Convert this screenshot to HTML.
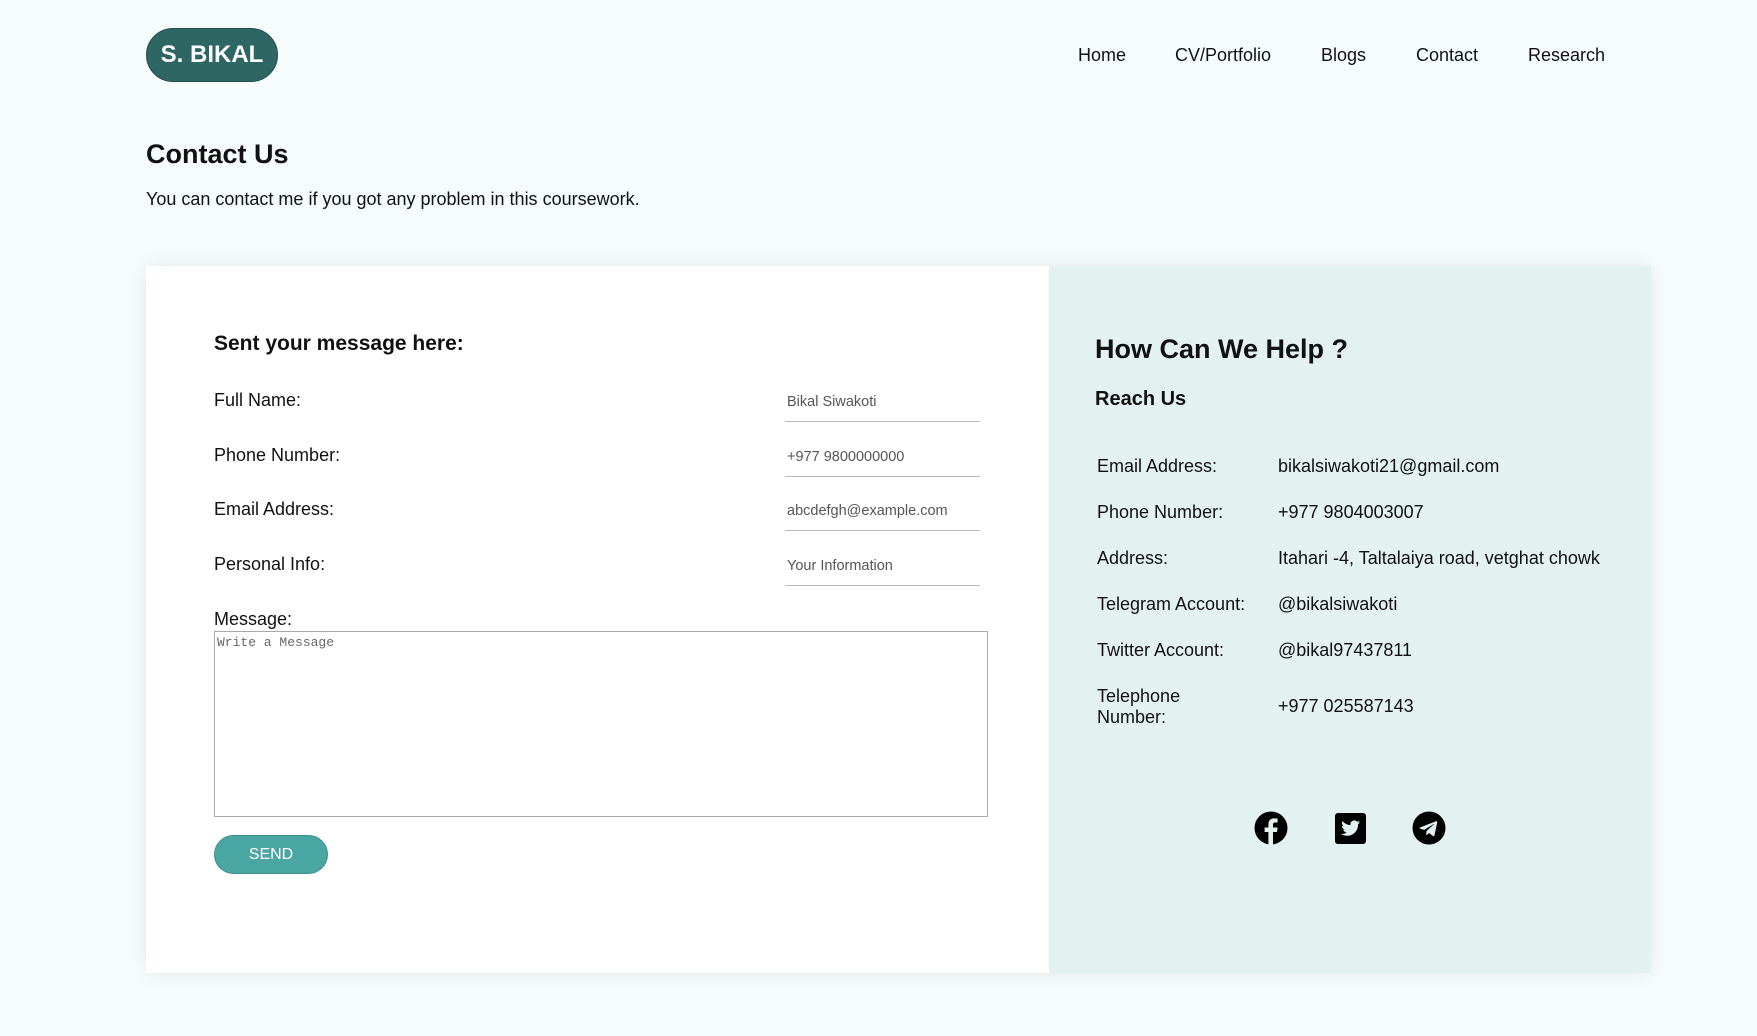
<!DOCTYPE html>
<html><head><meta charset="utf-8"><style>
*{margin:0;padding:0;box-sizing:border-box}
body{width:1757px;height:1036px;background:#f6fbfb;font-family:"Liberation Sans",Arial,sans-serif;color:#111;position:relative;overflow:hidden}
.a{position:absolute;white-space:nowrap}
.logo{left:146px;top:28px;width:132px;height:54px;background:#2e6664;border-radius:27px;border:1px solid #244f4d;color:#fff;font-weight:bold;font-size:24px;text-align:center;line-height:52px}
.nav{top:45px;font-size:18px;color:#111}
.card{left:146px;top:266px;width:1505px;height:707px;background:#fff;box-shadow:0 0 18px rgba(0,0,0,.08)}
.right{left:1049px;top:266px;width:602px;height:707px;background:#e3f1f0}
.lbl{font-size:18px;left:214px}
.inp{left:785px;width:195px;height:30px;border-bottom:1px solid #bbb;font-size:14.5px;color:#555;padding-left:2px;line-height:20px}
.rl{left:1097px;font-size:18px}
.rv{left:1278px;font-size:18px}
</style></head><body>
<div class="a logo">S. BIKAL</div>
<div class="a nav" style="left:1078px">Home</div>
<div class="a nav" style="left:1175px">CV/Portfolio</div>
<div class="a nav" style="left:1321px">Blogs</div>
<div class="a nav" style="left:1416px">Contact</div>
<div class="a nav" style="left:1528px">Research</div>
<div class="a" style="left:146px;top:139px;font-size:27px;font-weight:bold">Contact Us</div>
<div class="a" style="left:146px;top:189px;font-size:18px">You can contact me if you got any problem in this coursework.</div>
<div class="a card"></div>
<div class="a right"></div>
<div class="a" style="left:214px;top:332px;font-size:21px;font-weight:bold">Sent your message here:</div>
<div class="a lbl" style="top:390px">Full Name:</div>
<div class="a lbl" style="top:445px">Phone Number:</div>
<div class="a lbl" style="top:499px">Email Address:</div>
<div class="a lbl" style="top:554px">Personal Info:</div>
<div class="a inp" style="top:392px">Bikal Siwakoti</div>
<div class="a inp" style="top:447px">+977 9800000000</div>
<div class="a inp" style="top:501px">abcdefgh@example.com</div>
<div class="a inp" style="top:556px">Your Information</div>
<div class="a lbl" style="top:609px">Message:</div>
<div class="a" style="left:214px;top:631px;width:774px;height:186px;border:1px solid #aaa;font-family:'Liberation Mono',monospace;font-size:13px;color:#666;padding:3px 2px">Write a Message</div>
<div class="a" style="left:214px;top:835px;width:114px;height:39px;background:#4aa6a3;border:1px solid #3d8f8c;border-radius:20px;color:#fff;text-align:center;line-height:37px;font-size:16px">SEND</div>
<div class="a" style="left:1095px;top:334px;font-size:27px;font-weight:bold">How Can We Help ?</div>
<div class="a" style="left:1095px;top:388px;font-size:20px;font-weight:bold">Reach Us</div>
<div class="a rl" style="top:456px">Email Address:</div><div class="a rv" style="top:456px">bikalsiwakoti21@gmail.com</div>
<div class="a rl" style="top:502px">Phone Number:</div><div class="a rv" style="top:502px">+977 9804003007</div>
<div class="a rl" style="top:548px">Address:</div><div class="a rv" style="top:548px">Itahari -4, Taltalaiya road, vetghat chowk</div>
<div class="a rl" style="top:594px">Telegram Account:</div><div class="a rv" style="top:594px">@bikalsiwakoti</div>
<div class="a rl" style="top:640px">Twitter Account:</div><div class="a rv" style="top:640px">@bikal97437811</div>
<div class="a rl" style="top:686px;line-height:21px">Telephone<br>Number:</div><div class="a rv" style="top:696px">+977 025587143</div>
<svg class="a" style="left:1254px;top:811px" width="34" height="34" viewBox="0 0 34 34"><circle cx="17" cy="17" r="16.5" fill="#000"/><path d="M19 34V21h4l.6-4.5H19v-2.8c0-1.3.4-2.2 2.2-2.2h2.4V7.6c-.4-.1-1.8-.2-3.5-.2-3.4 0-5.7 2.1-5.7 5.9v3.2h-3.8V21h3.8v13z" fill="#e3f1f0"/></svg>
<svg class="a" style="left:1335px;top:813px" width="31" height="31" viewBox="0 0 31 31"><rect width="31" height="31" rx="3" fill="#000"/><path d="M25 9.2c-.7.3-1.4.5-2.2.6.8-.5 1.4-1.200 1.7-2.1-.7.4-1.6.8-2.4.9a3.9 3.9 0 0 0-6.6 3.5c-3.2-.2-6.1-1.7-8-4.1-1 1.8-.5 4 1.2 5.2-.6 0-1.2-.2-1.8-.5 0 1.9 1.3 3.5 3.1 3.8-.6.2-1.2.2-1.8.1.5 1.6 2 2.7 3.6 2.7A7.8 7.8 0 0 1 6 21c1.7 1.1 3.8 1.8 6 1.8 7.2 0 11.3-6.1 11.1-11.6.8-.6 1.4-1.2 1.9-2z" fill="#e3f1f0"/></svg>
<svg class="a" style="left:1412px;top:811px" width="34" height="34" viewBox="0 0 34 34"><circle cx="17" cy="17" r="16.5" fill="#000"/><path d="M8 16.5l16-6.3c.8-.3 1.4.2 1.2 1.3l-2.7 12.8c-.2.9-.8 1.1-1.5.7l-4-3-2 1.9c-.2.2-.4.4-.8.4l.3-4.2 7.5-6.8c.3-.3-.1-.5-.5-.2l-9.3 5.8-4-1.2c-.9-.3-.9-.9.2-1.2z" fill="#e3f1f0"/></svg>
</body></html>
